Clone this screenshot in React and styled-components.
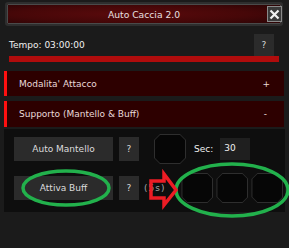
import styled, { createGlobalStyle } from "styled-components";

const GlobalStyle = createGlobalStyle`
  html, body {
    margin: 0;
    padding: 0;
    background: #1a1a1a;
  }
  * {
    box-sizing: border-box;
  }
`;

const Window = styled.div`
  position: relative;
  width: 289px;
  height: 248px;
  overflow: hidden;
  background: #1b1b1b;
  font-family: "DejaVu Sans", Tahoma, sans-serif;
  font-size: 9px;
  color: #e6e6e6;
  padding-top: 2px;
`;

const TitleBar = styled.div`
  position: relative;
  margin: 0 6px 0 5px;
  height: 24px;
  border: 2px solid #2e2e2e;
  outline: 1px solid #4a4a4a;
  outline-offset: -3px;
  border-radius: 3px;
  background: radial-gradient(ellipse at 45% 50%, #5a0a0c 0%, #460708 55%, #280405 100%);
  display: flex;
  align-items: center;
  justify-content: center;
  color: #e8e0e0;
  font-size: 9.2px;
`;

const CloseButton = styled.div`
  position: absolute;
  right: -1px;
  top: 2px;
  width: 15px;
  height: 16px;
  background: #3a3a3a;
  border: 1px solid #8a8a8a;
  display: flex;
  align-items: center;
  justify-content: center;
`;

const TimerRow = styled.div`
  display: flex;
  justify-content: space-between;
  align-items: flex-start;
  padding: 8px 15px 0 9px;
  height: 30px;
`;

const TimerText = styled.span`
  padding-top: 6px;
  color: #f0f0f0;
`;

const HelpButton = styled.div`
  width: 20px;
  height: ${(p) => p.$h || 24}px;
  background: #2b2b2b;
  color: #d8d8d8;
  display: flex;
  align-items: center;
  justify-content: center;
  flex-shrink: 0;
`;

const ProgressBar = styled.div`
  margin: 0 10px 0 9px;
  height: 6px;
  background: #b00c0c;
`;

const Accordion = styled.div`
  margin: ${(p) => p.$mt}px 5px 0 4px;
  height: ${(p) => p.$h}px;
  background: #2d0000;
  border-left: 3px solid #ff1010;
  display: flex;
  align-items: center;
  justify-content: space-between;
  padding: 0 ${(p) => p.$pr}px 0 12px;
  color: #eadada;
`;

const Panel = styled.div`
  margin: 2px 4px 0 4px;
  height: 83px;
  background: #0e0e0e;
  padding: 5px 0 0 10px;
  display: flex;
  flex-direction: column;
  gap: 9px;
`;

const Row = styled.div`
  display: flex;
  align-items: center;
  height: ${(p) => p.$h}px;
`;

const ActionButton = styled.div`
  width: 99px;
  height: 24px;
  background: #2b2b2b;
  color: #dcdcdc;
  display: flex;
  align-items: center;
  justify-content: center;
  margin-right: 6px;
  flex-shrink: 0;
`;

const Slot = styled.div`
  width: 32px;
  height: 30px;
  flex-shrink: 0;
  background: #2e2e2e;
  clip-path: polygon(6px 0, calc(100% - 6px) 0, 100% 6px, 100% calc(100% - 6px), calc(100% - 6px) 100%, 6px 100%, 0 calc(100% - 6px), 0 6px);
  padding: 1px;
  margin-left: ${(p) => p.$ml || 0}px;

  &::after {
    content: "";
    display: block;
    width: 100%;
    height: 100%;
    background: #060606;
    clip-path: polygon(5px 0, calc(100% - 5px) 0, 100% 5px, 100% calc(100% - 5px), calc(100% - 5px) 100%, 5px 100%, 0 calc(100% - 5px), 0 5px);
  }
`;

const SecLabel = styled.span`
  margin: 0 7px 0 8px;
  color: #f0f0f0;
`;

const SecInput = styled.div`
  width: 30px;
  height: 22px;
  background: #1f1f1f;
  color: #f0f0f0;
  padding: 5px 0 0 4px;
`;

const Cooldown = styled.span`
  margin-left: 5px;
  color: #a8a8a8;
  letter-spacing: 1px;
`;

const SlotGroup = styled.div`
  display: flex;
  gap: 3px;
  margin-left: 16px;
`;

const Annotations = styled.svg`
  position: absolute;
  left: 0;
  top: 0;
  pointer-events: none;
`;

export default function App() {
  return (
    <>
      <GlobalStyle />
      <Window>
        <TitleBar>
          Auto Caccia 2.0
          <CloseButton>
            <svg width="11" height="11" viewBox="0 0 11 11">
              <path d="M1.5 1.5 L9.5 9.5 M9.5 1.5 L1.5 9.5" stroke="#f2f2f2" strokeWidth="2.2" />
            </svg>
          </CloseButton>
        </TitleBar>
        <TimerRow>
          <TimerText>Tempo: 03:00:00</TimerText>
          <HelpButton $h={22}>?</HelpButton>
        </TimerRow>
        <ProgressBar />
        <Accordion $mt={9} $h={25} $pr={14}>
          <span>Modalita' Attacco</span>
          <span>+</span>
        </Accordion>
        <Accordion $mt={5} $h={26} $pr={17}>
          <span>Supporto (Mantello &amp; Buff)</span>
          <span>-</span>
        </Accordion>
        <Panel>
          <Row $h={30}>
            <ActionButton>Auto Mantello</ActionButton>
            <HelpButton>?</HelpButton>
            <Slot $ml={15} />
            <SecLabel>Sec:</SecLabel>
            <SecInput>30</SecInput>
          </Row>
          <Row $h={30}>
            <ActionButton>Attiva Buff</ActionButton>
            <HelpButton>?</HelpButton>
            <Cooldown>(5s)</Cooldown>
            <SlotGroup>
              <Slot />
              <Slot />
              <Slot />
            </SlotGroup>
          </Row>
        </Panel>
        <Annotations width="289" height="248" viewBox="0 0 289 248">
          <ellipse cx="66" cy="188" rx="43" ry="17" fill="none" stroke="#22b14c" strokeWidth="3.5" />
          <ellipse cx="232" cy="190" rx="56" ry="26" fill="none" stroke="#22b14c" strokeWidth="3.5" />
          <path
            d="M151 181 L164 181 L164 174 L176 190 L164 205 L164 198 L151 198 Z"
            fill="none"
            stroke="#ed1c24"
            strokeWidth="3.5"
            strokeLinejoin="miter"
          />
        </Annotations>
      </Window>
    </>
  );
}
